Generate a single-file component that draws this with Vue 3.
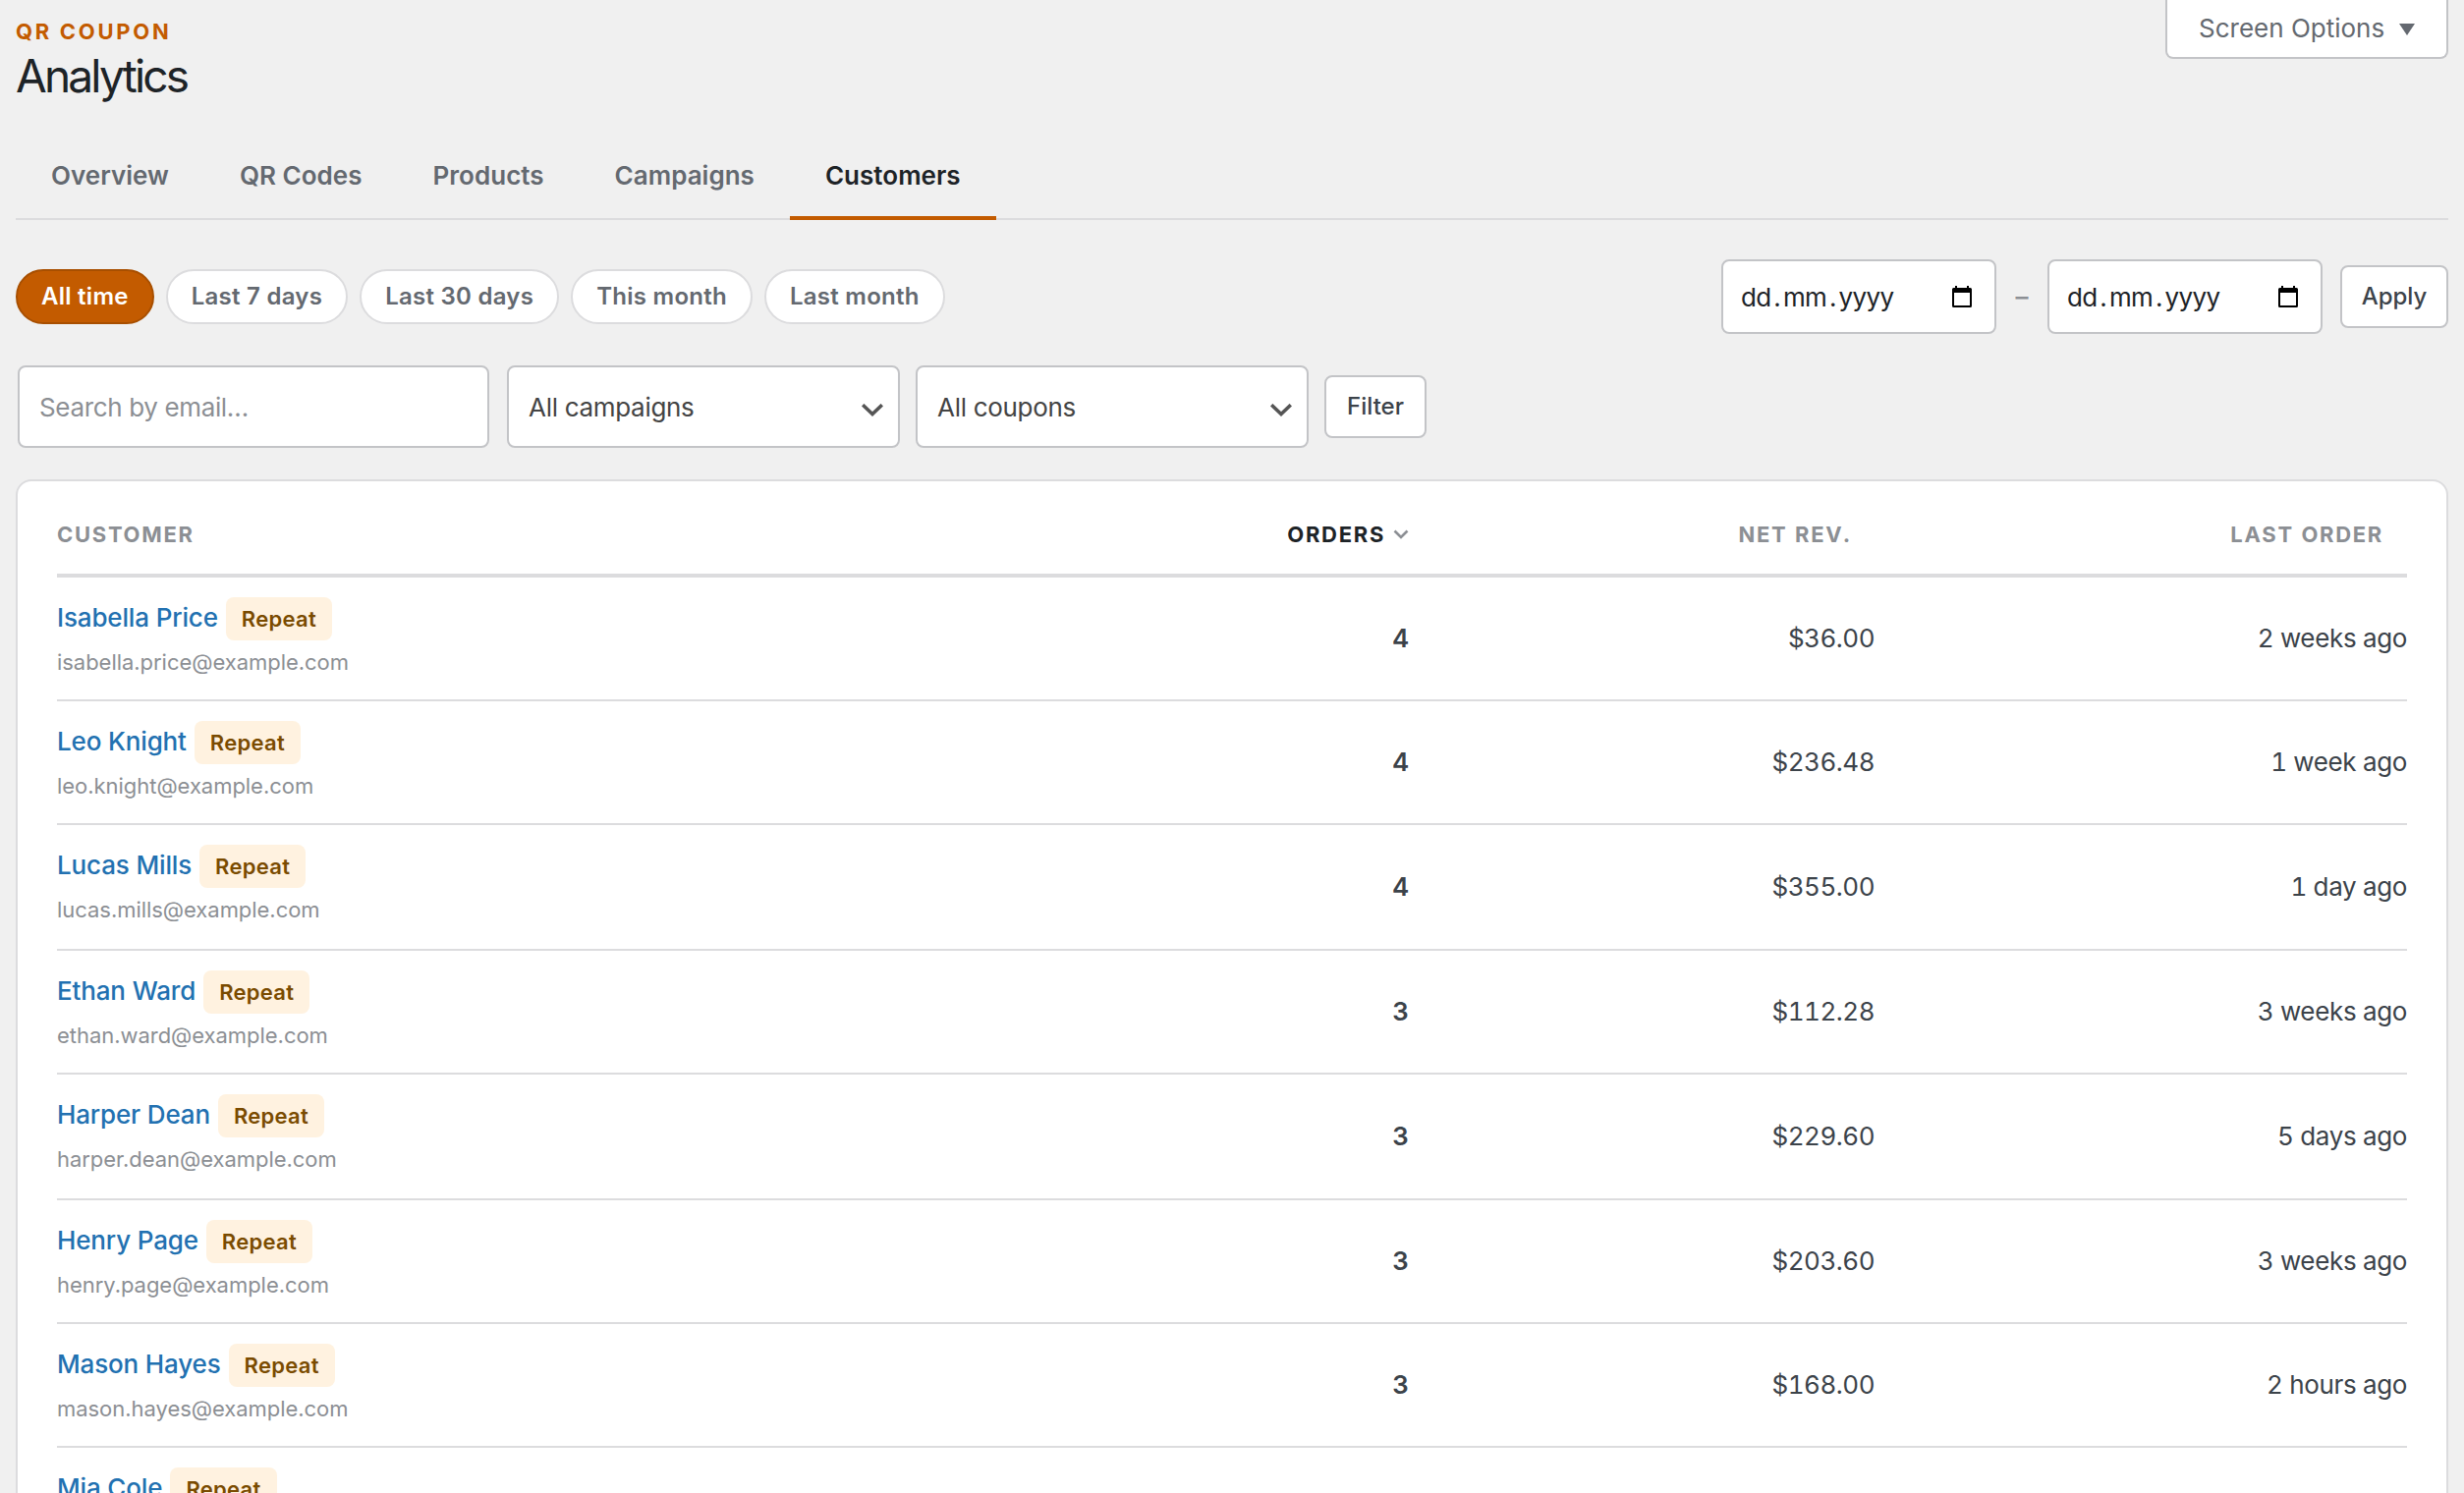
<script setup>
import { ref } from 'vue'

const tabs = ['Overview', 'QR Codes', 'Products', 'Campaigns', 'Customers']
const activeTab = ref('Customers')

const ranges = ['All time', 'Last 7 days', 'Last 30 days', 'This month', 'Last month']
const activeRange = ref('All time')

const email = ref('')

const customers = [
  { name: 'Isabella Price', email: 'isabella.price@example.com', orders: 4, revenue: '$36.00', last: '2 weeks ago' },
  { name: 'Leo Knight', email: 'leo.knight@example.com', orders: 4, revenue: '$236.48', last: '1 week ago' },
  { name: 'Lucas Mills', email: 'lucas.mills@example.com', orders: 4, revenue: '$355.00', last: '1 day ago' },
  { name: 'Ethan Ward', email: 'ethan.ward@example.com', orders: 3, revenue: '$112.28', last: '3 weeks ago' },
  { name: 'Harper Dean', email: 'harper.dean@example.com', orders: 3, revenue: '$229.60', last: '5 days ago' },
  { name: 'Henry Page', email: 'henry.page@example.com', orders: 3, revenue: '$203.60', last: '3 weeks ago' },
  { name: 'Mason Hayes', email: 'mason.hayes@example.com', orders: 3, revenue: '$168.00', last: '2 hours ago' },
  { name: 'Mia Cole' },
]
</script>

<template>
  <div class="page">
    <header class="page-head">
      <div class="titles">
        <div class="eyebrow">QR COUPON</div>
        <h1 class="title">Analytics</h1>
      </div>
      <button type="button" class="screen-options">
        <span>Screen Options</span>
        <svg width="16" height="12" viewBox="0 0 16 12" aria-hidden="true"><path d="M0 0h16L8 12z" fill="currentColor" /></svg>
      </button>
    </header>

    <nav class="tabs">
      <a
        v-for="tab in tabs"
        :key="tab"
        class="tab"
        :class="{ 'tab--active': tab === activeTab }"
        @click="activeTab = tab"
      >{{ tab }}</a>
    </nav>

    <div class="toolbar">
      <div class="pills">
        <button
          v-for="range in ranges"
          :key="range"
          type="button"
          class="pill"
          :class="{ 'pill--active': range === activeRange }"
          @click="activeRange = range"
        >{{ range }}</button>
      </div>
      <div class="dates">
        <template v-for="n in 2" :key="n">
          <span v-if="n === 2" class="dash">–</span>
          <div class="date">
            <span class="date__text">dd<span class="date__dot">.</span>mm<span class="date__dot">.</span>yyyy</span>
            <svg width="20" height="22" viewBox="0 0 20 22" aria-hidden="true">
              <path fill="currentColor" fill-rule="evenodd" d="M3 0h2v2h10V0h2v2h1.5A1.5 1.5 0 0 1 20 3.5v17a1.5 1.5 0 0 1-1.5 1.5h-17A1.5 1.5 0 0 1 0 20.5v-17A1.5 1.5 0 0 1 1.5 2H3zM2 7v13h16V7z" />
            </svg>
          </div>
        </template>
        <button type="button" class="btn btn--apply">Apply</button>
      </div>
    </div>

    <form class="filters" @submit.prevent>
      <input v-model="email" class="search" type="text" placeholder="Search by email…" />
      <div v-for="label in ['All campaigns', 'All coupons']" :key="label" class="select">
        <span>{{ label }}</span>
        <svg width="22" height="13" viewBox="0 0 22 13" aria-hidden="true"><path d="M1.2 1.2L11 10.5l9.8-9.3" fill="none" stroke="#555" stroke-width="3.5" /></svg>
      </div>
      <button type="submit" class="btn btn--filter">Filter</button>
    </form>

    <section class="card">
      <div class="row row--head">
        <div class="th">CUSTOMER</div>
        <div class="th th--sorted num">
          <span>ORDERS</span>
          <svg width="16" height="12" viewBox="0 0 16 12" aria-hidden="true"><path d="M1.5 2.5L8 9l6.5-6.5" fill="none" stroke="#8c8f94" stroke-width="2.6" /></svg>
        </div>
        <div class="th th--sortable num">NET REV.</div>
        <div class="th th--sortable num">LAST ORDER</div>
      </div>
      <div v-for="c in customers" :key="c.name" class="row">
        <div class="customer">
          <div class="who">
            <a class="name">{{ c.name }}</a>
            <span class="badge">Repeat</span>
          </div>
          <div class="email">{{ c.email }}</div>
        </div>
        <div class="num orders">{{ c.orders }}</div>
        <div class="num revenue">{{ c.revenue }}</div>
        <div class="num last">{{ c.last }}</div>
      </div>
    </section>
  </div>
</template>

<style>
body {
  background: #f0f0f0;
  overflow: hidden;
}
</style>

<style scoped>
.page {
  box-sizing: border-box;
  height: 1520px;
  overflow: hidden;
  padding: 0 16px;
  background: #f0f0f0;
  color: #3c434a;
  font-family: Inter, "Liberation Sans", sans-serif;
  font-size: 26px;
  line-height: 36px;
}

button {
  font-family: inherit;
  cursor: pointer;
}

.page-head {
  display: flex;
  justify-content: space-between;
  align-items: flex-start;
  height: 144px;
}

.eyebrow {
  padding-top: 18px;
  color: #c35b00;
  font-size: 22px;
  font-weight: 700;
  line-height: 28px;
  letter-spacing: 2.7px;
}

.title {
  margin: 1px 0 0;
  color: #1d2327;
  font-size: 46px;
  font-weight: 400;
  line-height: 60px;
  letter-spacing: -2.8px;
}

.screen-options {
  display: flex;
  align-items: center;
  justify-content: space-between;
  box-sizing: border-box;
  width: 288px;
  height: 60px;
  padding: 0 32px 2px;
  border: 2px solid #c3c4c7;
  border-top: 0;
  border-radius: 0 0 8px 8px;
  background: #fff;
  color: #646970;
  font-size: 26px;
}

.screen-options svg {
  margin-top: 4px;
}

.tabs {
  display: flex;
  box-sizing: border-box;
  height: 80px;
  border-bottom: 2px solid #dcdcde;
}

.tab {
  box-sizing: border-box;
  height: 80px;
  padding: 17px 36px 0;
  border-bottom: 4px solid transparent;
  color: #646970;
  font-weight: 600;
  letter-spacing: 0.02px;
}

.tab--active {
  border-bottom-color: #c35b00;
  color: #1d2327;
}

.toolbar {
  display: flex;
  justify-content: space-between;
  align-items: center;
  height: 76px;
  margin-top: 40px;
}

.pills {
  display: flex;
  gap: 12px;
}

.pill {
  box-sizing: border-box;
  height: 56px;
  padding: 0 24px 2px;
  border: 2px solid #dcdcde;
  border-radius: 28px;
  background: #fff;
  color: #646970;
  font-size: 24px;
  font-weight: 600;
  letter-spacing: 0.26px;
}

.pill--active {
  border-color: #a84f00;
  background: #c35b00;
  color: #fff;
}

.dates {
  display: flex;
  align-items: center;
}

.date {
  display: flex;
  align-items: center;
  justify-content: space-between;
  box-sizing: border-box;
  width: 280px;
  height: 76px;
  padding: 0 23px 0 18px;
  border: 2px solid #c3c4c7;
  border-radius: 8px;
  background: #fff;
  color: #1d2327;
}

.date__text {
  padding-top: 2px;
  letter-spacing: -0.6px;
}

.date__dot {
  margin: 0 2.7px;
}

.date svg {
  color: #000;
}

.dash {
  width: 52px;
  color: #8c8f94;
  font-weight: 500;
  text-align: center;
}

.btn {
  box-sizing: border-box;
  height: 64px;
  padding: 0 0 2px;
  border: 2px solid #c3c4c7;
  border-radius: 8px;
  background: #fff;
  color: #3c434a;
  font-size: 24px;
  font-weight: 500;
}

.btn--apply {
  width: 110px;
  margin-left: 18px;
}

.btn--filter {
  width: 104px;
}

.filters {
  display: flex;
  align-items: center;
  gap: 16px;
  height: 84px;
  margin: 32px 0 32px 2px;
}

.search {
  box-sizing: border-box;
  width: 480px;
  height: 84px;
  margin-right: 2px;
  padding: 0 20px;
  border: 2px solid #c3c4c7;
  border-radius: 8px;
  background: #fff;
  color: #3c434a;
  font-family: inherit;
  font-size: 26px;
  letter-spacing: -0.35px;
}

.search::placeholder {
  color: #8c8f94;
}

.select {
  display: flex;
  align-items: center;
  justify-content: space-between;
  box-sizing: border-box;
  width: 400px;
  height: 84px;
  padding: 2px 15px 0 20px;
  border: 2px solid #c3c4c7;
  border-radius: 8px;
  background: #fff;
  color: #444;
  letter-spacing: -0.3px;
}

.select svg {
  margin-top: 5px;
}

.card {
  padding: 0 40px;
  border: 2px solid #dcdcde;
  border-radius: 16px;
  background: #fff;
}

.row {
  display: grid;
  grid-template-columns: 1060px 316px 474px 542px;
  align-items: center;
  box-sizing: border-box;
  height: 126px;
  border-bottom: 2px solid #dcdcde;
}

.row:nth-child(4),
.row:nth-child(6) {
  height: 128px;
}

.row--head {
  height: 98px;
  padding-top: 14px;
  border-bottom-width: 4px;
}

.num {
  font-variant-numeric: tabular-nums;
  text-align: right;
}

.orders {
  font-weight: 600;
}

.revenue {
  letter-spacing: -0.5px;
}

.last {
  letter-spacing: -0.35px;
}

.th {
  color: #8c8f94;
  font-size: 22px;
  font-weight: 700;
  letter-spacing: 1.7px;
}

.th--sorted {
  display: flex;
  align-items: center;
  justify-content: flex-end;
  gap: 8px;
  color: #1d2327;
}

.th--sortable {
  padding-right: 24px;
}

.customer {
  align-self: start;
  padding-top: 20px;
}

.who {
  display: flex;
  align-items: center;
  gap: 8px;
  height: 44px;
}

.name {
  margin-top: -2px;
  color: #2271b1;
  font-weight: 500;
  letter-spacing: -0.15px;
}

.badge {
  padding: 0 16px;
  border-radius: 8px;
  background: #fff2e0;
  color: #7a4b00;
  font-size: 22px;
  font-weight: 600;
  line-height: 44px;
  letter-spacing: 0.3px;
}

.email {
  margin-top: 6px;
  color: #8c8f94;
  font-size: 22px;
  line-height: 32px;
  letter-spacing: -0.04px;
}
</style>
